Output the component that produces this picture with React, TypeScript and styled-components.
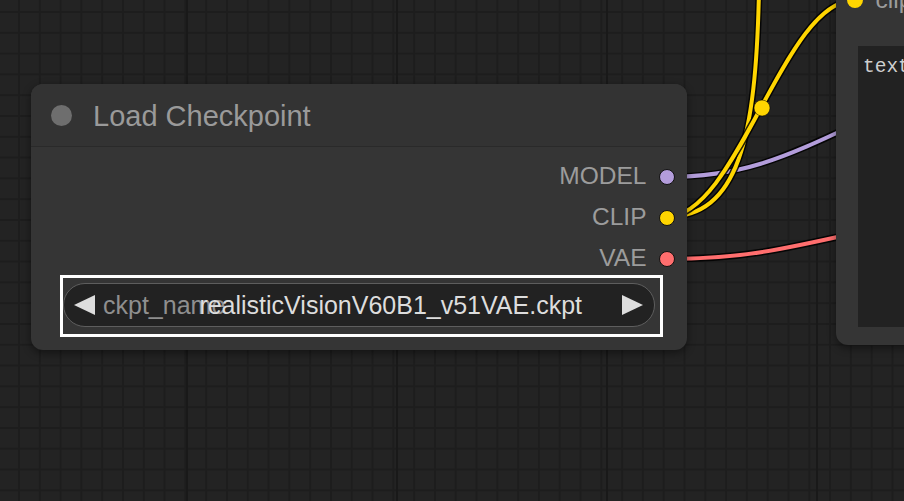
import React from "react";
import styled, { createGlobalStyle } from "styled-components";

const Global = createGlobalStyle`
  html, body { margin: 0; padding: 0; background: #232323; }
  #root { width: 904px; height: 501px; }
`;

const Canvas = styled.div`
  position: relative;
  width: 904px;
  height: 501px;
  overflow: hidden;
  font-family: Arial, "Liberation Sans", sans-serif;
  background-color: #232323;
  background-image:
    linear-gradient(to right, #191919 2px, transparent 2px),
    linear-gradient(to right, #1d1d1d 2px, transparent 2px),
    linear-gradient(to bottom, #1d1d1d 2px, transparent 2px);
  background-size: 210px 100%, 20.8px 100%, 100% 20.8px;
  background-position: 186px 0, 18px 0, 0 11px;
`;

const Wires = styled.svg`
  position: absolute;
  left: 0;
  top: 0;
  width: 904px;
  height: 501px;
  pointer-events: none;
`;

const Node = styled.div<{ $x: number; $y: number; $w: number; $h: number }>`
  position: absolute;
  left: ${(p) => p.$x}px;
  top: ${(p) => p.$y}px;
  width: ${(p) => p.$w}px;
  height: ${(p) => p.$h}px;
  box-sizing: border-box;
  background: #353535;
  border-radius: 12px;
  box-shadow: 0 3px 8px rgba(0, 0, 0, 0.45);
  display: flex;
  flex-direction: column;
`;

const TitleBar = styled.div`
  height: 62px;
  flex: none;
  display: flex;
  align-items: center;
  gap: 21px;
  padding-left: 20px;
  background: #333333;
  border-radius: 12px 12px 0 0;
  border-bottom: 1px solid #2a2a2a;
`;

const TitleDot = styled.div`
  width: 21px;
  height: 21px;
  border-radius: 50%;
  background: #6e6e6e;
`;

const Title = styled.div`
  font-size: 29px;
  color: #9a9a9a;
  line-height: 1;
  padding-top: 2px;
`;

const Outputs = styled.div`
  display: flex;
  flex-direction: column;
  padding-top: 9px;
  padding-right: 12.5px;
`;

const SlotRow = styled.div<{ $side: "left" | "right" }>`
  height: 41px;
  display: flex;
  align-items: center;
  justify-content: ${(p) => (p.$side === "right" ? "flex-end" : "flex-start")};
  flex-direction: ${(p) => (p.$side === "right" ? "row" : "row-reverse")};
  gap: 12px;
`;

const SlotLabel = styled.span`
  font-size: 24.5px;
  color: #9c9c9c;
  line-height: 1;
`;

const SlotDot = styled.span<{ $color: string; $bare?: boolean }>`
  width: 14px;
  height: 14px;
  border-radius: 50%;
  background: ${(p) => p.$color};
  border: 1.6px solid ${(p) => (p.$bare ? "transparent" : "#111")};
  flex: none;
`;

const WidgetFrame = styled.div`
  margin: -1px 27px 0 32px;
  height: 56px;
  box-sizing: border-box;
  outline: 3px solid #ffffff;
  padding: 5px 5px 0 0;
`;

const Combo = styled.div`
  height: 44px;
  box-sizing: border-box;
  border-radius: 22px;
  background: #222222;
  border: 1.5px solid #5e5e5e;
  display: grid;
  grid-template-columns: 21px 1fr 21px;
  align-items: center;
  padding: 0 11px 0 10px;
`;

const Arrow = styled.svg`
  width: 21px;
  height: 20px;
  display: block;
`;

const ComboText = styled.div`
  display: grid;
  align-items: center;
  padding: 1px 40px 0 8px;
  font-size: 25px;
  line-height: 1;
  white-space: nowrap;
  & > * {
    grid-area: 1 / 1;
  }
`;

const ComboLabel = styled.span`
  justify-self: start;
  color: #8f8f8f;
`;

const ComboValue = styled.span`
  justify-self: end;
  color: #dddddd;
`;

const InputRow = styled.div`
  height: 40px;
  margin-top: 4px;
  display: flex;
  align-items: center;
  gap: 13px;
  padding-left: 10.5px;
  flex: none;
`;

const TextArea = styled.div`
  margin: 26px 0 0 22px;
  height: 281px;
  background: #222222;
  padding: 10px 0 0 5px;
  box-sizing: border-box;
  font-family: "Liberation Mono", "DejaVu Sans Mono", monospace;
  font-size: 19.5px;
  color: #cfcfcf;
  line-height: 1.2;
`;

const Wire = ({ d, color }: { d: string; color: string }) => (
  <g>
    <path d={d} stroke="#000" strokeOpacity={0.85} strokeWidth={7} fill="none" />
    <path d={d} stroke={color} strokeWidth={4} fill="none" />
  </g>
);

export default function App() {
  return (
    <>
      <Global />
      <Canvas>
        <Wires viewBox="0 0 904 501">
          <Wire d="M 666 177 C 740 177, 780 160, 860 122" color="#b39ddb" />
          <Wire d="M 666 259 C 740 259, 780 250, 860 232" color="#ff6e6e" />
          <Wire d="M 666 217 C 738 217, 756 140, 759 -10" color="#ffd500" />
          <Wire d="M 666 217 C 738 217, 783 0, 855 0" color="#ffd500" />
          <circle cx={762} cy={108} r={8} fill="#ffd500" stroke="#000" strokeOpacity={0.5} strokeWidth={1} />
        </Wires>

        <Node $x={31} $y={84} $w={656} $h={266}>
          <TitleBar>
            <TitleDot />
            <Title>Load Checkpoint</Title>
          </TitleBar>
          <Outputs>
            <SlotRow $side="right">
              <SlotLabel>MODEL</SlotLabel>
              <SlotDot $color="#b39ddb" />
            </SlotRow>
            <SlotRow $side="right">
              <SlotLabel>CLIP</SlotLabel>
              <SlotDot $color="#ffd500" />
            </SlotRow>
            <SlotRow $side="right">
              <SlotLabel>VAE</SlotLabel>
              <SlotDot $color="#ff6e6e" />
            </SlotRow>
          </Outputs>
          <WidgetFrame>
            <Combo>
              <Arrow viewBox="0 0 21 20">
                <polygon points="21,0 21,20 0,10" fill="#dddddd" />
              </Arrow>
              <ComboText>
                <ComboLabel>ckpt_name</ComboLabel>
                <ComboValue>realisticVisionV60B1_v51VAE.ckpt</ComboValue>
              </ComboText>
              <Arrow viewBox="0 0 21 20">
                <polygon points="0,0 0,20 21,10" fill="#dddddd" />
              </Arrow>
            </Combo>
          </WidgetFrame>
        </Node>

        <Node $x={836} $y={-24} $w={120} $h={369}>
          <InputRow>
            <SlotDot $color="#ffd500" $bare />
            <SlotLabel>clip</SlotLabel>
          </InputRow>
          <TextArea>text</TextArea>
        </Node>
      </Canvas>
    </>
  );
}
